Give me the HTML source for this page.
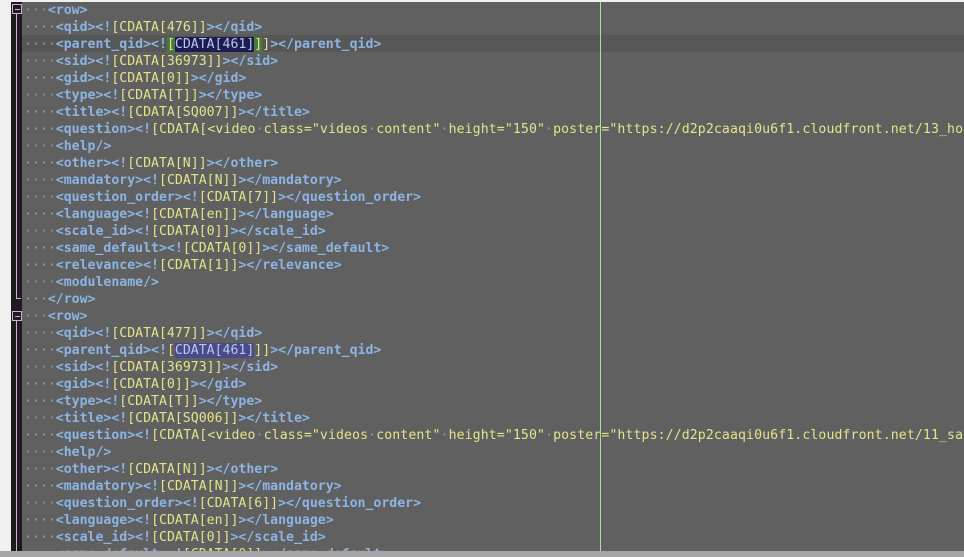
<!DOCTYPE html>
<html><head><meta charset="utf-8"><style>
html,body{margin:0;padding:0;width:964px;height:557px;overflow:hidden;background:#f0f0f0;position:relative}
#gut{position:absolute;left:11px;top:2px;width:11px;height:549px;background:#1c1c1c}
#ed{position:absolute;left:22px;top:2px;width:942px;height:549px;background:#606060;overflow:hidden}
#bot{position:absolute;left:0;top:551px;width:964px;height:6px;background:#a4a4a4}
.cur{position:absolute;left:0;top:33px;width:942px;height:17px;background:#575757}
.vl{position:absolute;left:578px;top:0;width:1px;height:549px;background:#a8e0a0}
pre{margin:0;position:absolute;left:2px;top:0;font-family:"DejaVu Sans Mono","Liberation Mono",monospace;font-size:13.2px;line-height:17px;color:#e4e48a;white-space:pre}
.t{color:#8cb4e4;font-weight:bold}
.d{color:#9a9a9a}
.q{letter-spacing:0.1px}
.hl{background:#1c1c50;color:#b8c8f0}
.hl2{background:#4a4a88;color:#b8c8f0}
.bk{background:#4a7a3a}
.fold{position:absolute;left:12px;width:8px;height:8px;border:1px solid #d8a8d8;background:#1c1c1c}
.fold:after{content:"";position:absolute;left:2px;top:4px;width:5px;height:1px;background:#d8a8d8}
.fl{position:absolute;left:16px;width:1px;background:#d8a8d8}
</style></head><body>
<div id="gut"></div>
<div class="fold" style="top:4px"></div>
<div class="fl" style="top:14px;height:285px"></div>
<div class="fl" style="top:298px;height:1px;width:5px"></div>
<div class="fold" style="top:311px"></div>
<div class="fl" style="top:321px;height:230px"></div>
<div id="ed"><div class="cur"></div>
<pre><span class="d">···</span><span class="t">&lt;row&gt;</span>
<span class="d">····</span><span class="t">&lt;qid&gt;</span><span class="t">&lt;!</span>[CDATA[476]]<span class="t">&gt;&lt;/qid&gt;</span>
<span class="d">····</span><span class="t">&lt;parent_qid&gt;</span><span class="t">&lt;!</span><span class="bk">[</span><span class="hl">CDATA[461]</span><span class="bk">]</span>]<span class="t">&gt;&lt;/parent_qid&gt;</span>
<span class="d">····</span><span class="t">&lt;sid&gt;</span><span class="t">&lt;!</span>[CDATA[36973]]<span class="t">&gt;&lt;/sid&gt;</span>
<span class="d">····</span><span class="t">&lt;gid&gt;</span><span class="t">&lt;!</span>[CDATA[0]]<span class="t">&gt;&lt;/gid&gt;</span>
<span class="d">····</span><span class="t">&lt;type&gt;</span><span class="t">&lt;!</span>[CDATA[T]]<span class="t">&gt;&lt;/type&gt;</span>
<span class="d">····</span><span class="t">&lt;title&gt;</span><span class="t">&lt;!</span>[CDATA[SQ007]]<span class="t">&gt;&lt;/title&gt;</span>
<span class="d">····</span><span class="t">&lt;question&gt;</span><span class="t">&lt;!</span><span class="q">[CDATA[&lt;video<span class="d">·</span>class="videos<span class="d">·</span>content"<span class="d">·</span>height="150"<span class="d">·</span>poster="https://d2p2caaqi0u6f1.cloudfront.net/13_hope.jpg"</span>
<span class="d">····</span><span class="t">&lt;help/&gt;</span>
<span class="d">····</span><span class="t">&lt;other&gt;</span><span class="t">&lt;!</span>[CDATA[N]]<span class="t">&gt;&lt;/other&gt;</span>
<span class="d">····</span><span class="t">&lt;mandatory&gt;</span><span class="t">&lt;!</span>[CDATA[N]]<span class="t">&gt;&lt;/mandatory&gt;</span>
<span class="d">····</span><span class="t">&lt;question_order&gt;</span><span class="t">&lt;!</span>[CDATA[7]]<span class="t">&gt;&lt;/question_order&gt;</span>
<span class="d">····</span><span class="t">&lt;language&gt;</span><span class="t">&lt;!</span>[CDATA[en]]<span class="t">&gt;&lt;/language&gt;</span>
<span class="d">····</span><span class="t">&lt;scale_id&gt;</span><span class="t">&lt;!</span>[CDATA[0]]<span class="t">&gt;&lt;/scale_id&gt;</span>
<span class="d">····</span><span class="t">&lt;same_default&gt;</span><span class="t">&lt;!</span>[CDATA[0]]<span class="t">&gt;&lt;/same_default&gt;</span>
<span class="d">····</span><span class="t">&lt;relevance&gt;</span><span class="t">&lt;!</span>[CDATA[1]]<span class="t">&gt;&lt;/relevance&gt;</span>
<span class="d">····</span><span class="t">&lt;modulename/&gt;</span>
<span class="d">···</span><span class="t">&lt;/row&gt;</span>
<span class="d">···</span><span class="t">&lt;row&gt;</span>
<span class="d">····</span><span class="t">&lt;qid&gt;</span><span class="t">&lt;!</span>[CDATA[477]]<span class="t">&gt;&lt;/qid&gt;</span>
<span class="d">····</span><span class="t">&lt;parent_qid&gt;</span><span class="t">&lt;!</span>[<span class="hl2">CDATA[461]</span>]]<span class="t">&gt;&lt;/parent_qid&gt;</span>
<span class="d">····</span><span class="t">&lt;sid&gt;</span><span class="t">&lt;!</span>[CDATA[36973]]<span class="t">&gt;&lt;/sid&gt;</span>
<span class="d">····</span><span class="t">&lt;gid&gt;</span><span class="t">&lt;!</span>[CDATA[0]]<span class="t">&gt;&lt;/gid&gt;</span>
<span class="d">····</span><span class="t">&lt;type&gt;</span><span class="t">&lt;!</span>[CDATA[T]]<span class="t">&gt;&lt;/type&gt;</span>
<span class="d">····</span><span class="t">&lt;title&gt;</span><span class="t">&lt;!</span>[CDATA[SQ006]]<span class="t">&gt;&lt;/title&gt;</span>
<span class="d">····</span><span class="t">&lt;question&gt;</span><span class="t">&lt;!</span><span class="q">[CDATA[&lt;video<span class="d">·</span>class="videos<span class="d">·</span>content"<span class="d">·</span>height="150"<span class="d">·</span>poster="https://d2p2caaqi0u6f1.cloudfront.net/11_sad.jpg"</span>
<span class="d">····</span><span class="t">&lt;help/&gt;</span>
<span class="d">····</span><span class="t">&lt;other&gt;</span><span class="t">&lt;!</span>[CDATA[N]]<span class="t">&gt;&lt;/other&gt;</span>
<span class="d">····</span><span class="t">&lt;mandatory&gt;</span><span class="t">&lt;!</span>[CDATA[N]]<span class="t">&gt;&lt;/mandatory&gt;</span>
<span class="d">····</span><span class="t">&lt;question_order&gt;</span><span class="t">&lt;!</span>[CDATA[6]]<span class="t">&gt;&lt;/question_order&gt;</span>
<span class="d">····</span><span class="t">&lt;language&gt;</span><span class="t">&lt;!</span>[CDATA[en]]<span class="t">&gt;&lt;/language&gt;</span>
<span class="d">····</span><span class="t">&lt;scale_id&gt;</span><span class="t">&lt;!</span>[CDATA[0]]<span class="t">&gt;&lt;/scale_id&gt;</span>
<span class="d">····</span><span class="t">&lt;same_default&gt;</span><span class="t">&lt;!</span>[CDATA[0]]<span class="t">&gt;&lt;/same_default&gt;</span></pre>
<div class="vl"></div>
</div>
<div id="bot"></div>
</body></html>
